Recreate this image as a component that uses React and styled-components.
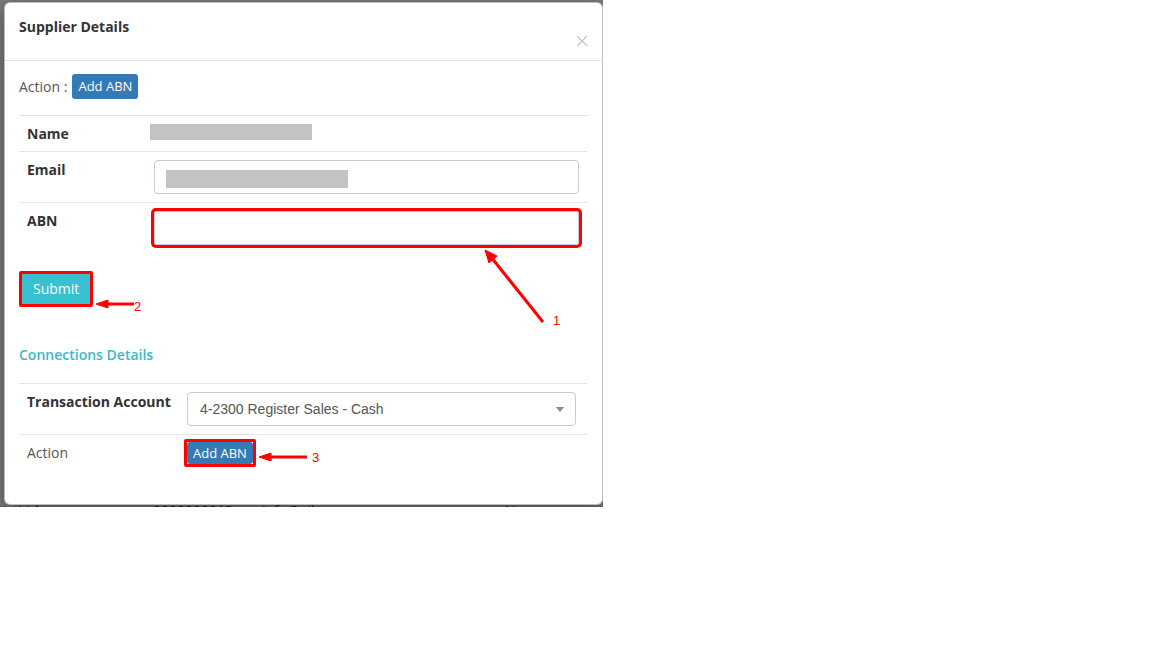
import React from "react";
import styled, { createGlobalStyle } from "styled-components";

const GlobalStyle = createGlobalStyle`
  body {
    margin: 0;
    background: #fff;
    font-family: "Open Sans", "Liberation Sans", sans-serif;
  }
`;

const Stage = styled.div`
  position: relative;
  width: 603px;
  height: 507px;
  overflow: hidden;
`;

// page that sits under the backdrop, only its edges show
const BackPage = styled.div`
  padding-top: 501px;
  font-size: 14px;
  color: #333;
`;

const BackRow = styled.div`
  display: grid;
  grid-template-columns: 153px 109px 243px 1fr;
  line-height: 20px;
  span:first-child {
    margin-left: -6px;
  }
`;

const Backdrop = styled.div`
  position: absolute;
  inset: 0;
  background: rgba(0, 0, 0, 0.52);
`;

const Modal = styled.div`
  position: absolute;
  top: 2px;
  left: 4px;
  width: 599px;
  height: 503px;
  box-sizing: border-box;
  background: #fff;
  border: 1px solid rgba(0, 0, 0, 0.25);
  border-radius: 6px;
  box-shadow: 0 5px 15px rgba(0, 0, 0, 0.4);
`;

const Header = styled.div`
  display: flex;
  justify-content: space-between;
  height: 58px;
  box-sizing: border-box;
  padding: 14px 14px 0 14px;
  border-bottom: 1px solid #e5e5e5;
`;

const Title = styled.h4`
  margin: 0;
  font-size: 14px;
  font-weight: 700;
  line-height: 20px;
  color: #333;
`;

const Close = styled.button`
  align-self: flex-start;
  margin-top: 18px;
  padding: 0;
  border: 0;
  background: none;
  width: 12px;
  height: 12px;
  display: flex;
  cursor: pointer;
`;

const Body = styled.div`
  padding: 13px 15px 0 14px;
`;

const ActionLine = styled.div`
  display: flex;
  align-items: center;
  gap: 5px;
  font-size: 14px;
  color: #555;
  line-height: 20px;
`;

const sizes = {
  md: { font: "14px", line: "20px", pad: "5px 11px" },
  sm: { font: "13px", line: "19px", pad: "3px 6px" },
  xs: { font: "13px", line: "18px", pad: "2px 6px" },
};

const Btn = styled.button`
  font-family: "Open Sans", "Liberation Sans", sans-serif;
  font-size: ${(p) => sizes[p.$size || "md"].font};
  line-height: ${(p) => sizes[p.$size || "md"].line};
  padding: ${(p) => sizes[p.$size || "md"].pad};
  color: #fff;
  background: ${(p) => (p.$variant === "info" ? "#37c0cf" : "#337ab7")};
  border: 0;
  border-radius: ${(p) => (p.$variant === "info" ? "0" : "3px")};
  cursor: pointer;
`;

const Marked = styled.span`
  display: inline-flex;
  border: 3px solid #f00;
  border-radius: 2px;
  margin-left: ${(p) => p.$shift || 0}px;
`;

const Table = styled.div`
  margin-top: ${(p) => p.$top}px;
  display: grid;
  grid-template-columns: ${(p) => p.$labelWidth}px 1fr;
`;

const Cell = styled.div`
  border-top: 1px solid #e4e4e4;
  padding: ${(p) => (p.$tight ? "4px 8px 8px" : "8px")};
  font-size: 14px;
  line-height: 19px;
  font-weight: ${(p) => (p.$bold ? 700 : 400)};
  color: ${(p) => (p.$bold ? "#333" : "#555")};
`;

const Redacted = styled.span`
  display: block;
  width: ${(p) => p.$w}px;
  height: ${(p) => p.$h}px;
  margin-left: ${(p) => p.$shift || 0}px;
  background: #c3c3c3;
`;

const FieldBox = styled.div`
  height: 34px;
  box-sizing: border-box;
  padding: 9px 11px;
  border: 1px solid #c5ccd9;
  border-radius: 4px;
  background: #fff;
`;

const TextInput = styled.input`
  display: block;
  width: 100%;
  height: 34px;
  box-sizing: border-box;
  margin: 0;
  border: 1px solid #c5ccd9;
  border-radius: 2px;
  box-shadow: ${(p) => (p.$marked ? "0 0 0 3px #f00" : "none")};
  outline: none;
`;

const Select = styled.div`
  width: calc(100% - 3px);
  height: 34px;
  box-sizing: border-box;
  display: flex;
  align-items: center;
  justify-content: space-between;
  padding: 0 11px 0 12px;
  border: 1px solid #c5ccd9;
  border-radius: 4px;
  font-family: "Liberation Sans", Arial, sans-serif;
  font-size: 14px;
  font-weight: 400;
  color: #555;
`;

const Caret = styled.span`
  width: 0;
  height: 0;
  border-left: 4px solid transparent;
  border-right: 4px solid transparent;
  border-top: 5px solid #888;
`;

const SubmitLine = styled.div`
  margin-top: 18px;
  display: flex;
`;

const SectionTitle = styled.h5`
  margin: 38px 0 0;
  font-size: 14px;
  line-height: 20px;
  font-weight: 600;
  color: #3bb8c9;
`;

const Annotations = styled.svg`
  position: absolute;
  top: 0;
  left: 0;
  pointer-events: none;
  font-family: "Liberation Sans", Arial, sans-serif;
`;

export default function App() {
  return (
    <>
      <GlobalStyle />
      <Stage>
        <BackPage>
          <BackRow>
            <span>Pty Ltd</span>
            <span>0000000013</span>
            <span>info@aiko.com.au</span>
            <span>No</span>
          </BackRow>
        </BackPage>
        <Backdrop />
        <Modal>
          <Header>
            <Title>Supplier Details</Title>
            <Close aria-label="close">
              <svg width="12" height="12" viewBox="0 0 12 12">
                <path d="M1 1 L11 11 M11 1 L1 11" stroke="#c4c4c4" strokeWidth="1.2" />
              </svg>
            </Close>
          </Header>
          <Body>
            <ActionLine>
              Action :<Btn $size="sm">Add ABN</Btn>
            </ActionLine>

            <Table $top={16} $labelWidth={127}>
              <Cell $bold>Name</Cell>
              <Cell>
                <Redacted $w={162} $h={16} $shift={-4} />
              </Cell>
              <Cell $bold>Email</Cell>
              <Cell>
                <FieldBox>
                  <Redacted $w={182} $h={18} />
                </FieldBox>
              </Cell>
              <Cell $bold>ABN</Cell>
              <Cell>
                <TextInput $marked />
              </Cell>
            </Table>

            <SubmitLine>
              <Marked>
                <Btn $variant="info">Submit</Btn>
              </Marked>
            </SubmitLine>

            <SectionTitle>Connections Details</SectionTitle>

            <Table $top={18} $labelWidth={160}>
              <Cell $bold>Transaction Account</Cell>
              <Cell>
                <Select>
                  4-2300 Register Sales - Cash
                  <Caret />
                </Select>
              </Cell>
              <Cell>Action</Cell>
              <Cell $tight>
                <Marked $shift={-3}>
                  <Btn $size="xs">Add ABN</Btn>
                </Marked>
              </Cell>
            </Table>
          </Body>
        </Modal>
        <Annotations width="603" height="507" viewBox="0 0 603 507">
          <g fill="#f00" stroke="#f00">
            <line x1="543" y1="322" x2="491" y2="257" strokeWidth="3" />
            <polygon points="485,250 497,256 489,263" strokeWidth="1" />
            <line x1="106" y1="304" x2="134" y2="304" strokeWidth="3" />
            <polygon points="96,304 108,300 108,308" strokeWidth="1" />
            <line x1="269" y1="457" x2="307" y2="457" strokeWidth="3" />
            <polygon points="259,457 271,453 271,461" strokeWidth="1" />
          </g>
          <g fill="#f00" fontSize="13">
            <text x="553" y="325">1</text>
            <text x="134" y="311">2</text>
            <text x="312" y="462">3</text>
          </g>
        </Annotations>
      </Stage>
    </>
  );
}
